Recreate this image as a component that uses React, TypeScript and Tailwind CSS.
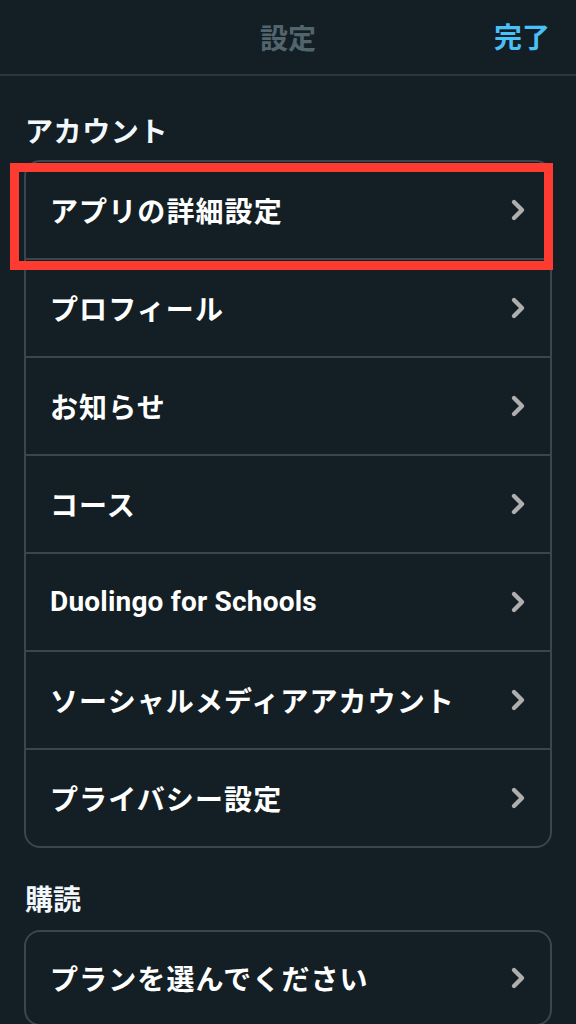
import React from "react";

const jp = { fontFamily: '"Noto Sans CJK JP", "Noto Sans", sans-serif' };

function Chevron() {
  return (
    <svg width="18" height="24" viewBox="0 0 18 24" className="shrink-0">
      <path d="M5 4 L13 12 L5 20" fill="none" stroke="#afafaf" strokeWidth="4.4" strokeLinecap="round" strokeLinejoin="round" />
    </svg>
  );
}

function Row({ label, latin, first }: { label: string; latin?: boolean; first?: boolean }) {
  return (
    <div className={`flex items-center justify-between pl-[24px] pr-[23px] ${first ? "h-[96px]" : "h-[98px] border-t-2 border-[#37464f]"}`}>
      {latin ? (
        <span className="text-[28px] font-bold text-white tracking-[0.2px]" style={{ fontFamily: 'Roboto, "Noto Sans", sans-serif' }}>
          {label}
        </span>
      ) : (
        <span className="text-[28px] font-bold text-white leading-none tracking-[1.1px]" style={jp}>
          {label}
        </span>
      )}
      <Chevron />
    </div>
  );
}

export default function App() {
  const rows = [
    "アプリの詳細設定",
    "プロフィール",
    "お知らせ",
    "コース",
    "Duolingo for Schools",
    "ソーシャルメディアアカウント",
    "プライバシー設定",
  ];
  return (
    <div className="min-h-[1024px] w-[576px] overflow-hidden bg-[#131f24]" style={jp}>
      <div className="relative flex h-[76px] items-center justify-center border-b-2 border-[#2a373d]">
        <span className="text-[28px] font-bold text-[#52656d] leading-none">設定</span>
        <span className="absolute right-[26px] top-[22px] text-[28px] font-bold text-[#49c0f8] leading-none">完了</span>
      </div>
      <div className="px-[24px]">
        <div className="pt-[38px] pb-[14px] pl-px text-[28px] font-bold text-[#f1f7fb] leading-[32px] tracking-[0.6px]">アカウント</div>
        <div className="relative rounded-[16px] border-2 border-[#37464f]">
          {rows.map((r, i) => (
            <Row key={r} label={r} first={i === 0} latin={r.startsWith("Duolingo")} />
          ))}
          <div className="pointer-events-none absolute left-[-16px] top-[1px] h-[107px] w-[543px] border-[9px] border-[#fe3b30]" />
        </div>
        <div className="pt-[34px] pb-[16px] pl-px text-[28px] font-bold text-[#f1f7fb] leading-[32px]">購読</div>
        <div className="rounded-[16px] border-2 border-[#37464f]">
          <div className="flex h-[92px] items-center justify-between pl-[24px] pr-[23px]">
            <span className="text-[28px] font-bold text-white leading-none tracking-[1.1px]">プランを選んでください</span>
            <Chevron />
          </div>
        </div>
      </div>
    </div>
  );
}
